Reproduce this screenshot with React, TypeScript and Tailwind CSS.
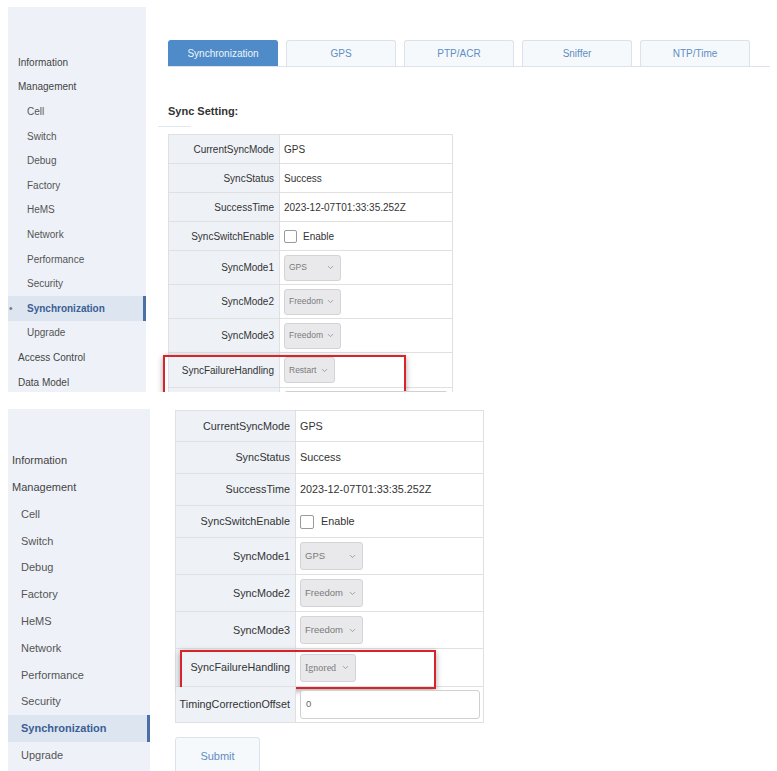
import React from 'react';
import { ChevronDown } from 'lucide-react';

const font = { fontFamily: '"Liberation Sans", Arial, sans-serif' };

type NavItem = { label: string; sub?: boolean; active?: boolean };

const navTop: NavItem[] = [
  { label: 'Information' },
  { label: 'Management' },
  { label: 'Cell', sub: true },
  { label: 'Switch', sub: true },
  { label: 'Debug', sub: true },
  { label: 'Factory', sub: true },
  { label: 'HeMS', sub: true },
  { label: 'Network', sub: true },
  { label: 'Performance', sub: true },
  { label: 'Security', sub: true },
  { label: 'Synchronization', sub: true, active: true },
  { label: 'Upgrade', sub: true },
  { label: 'Access Control' },
  { label: 'Data Model' },
];

const navBottom = navTop.slice(0, 12);

const tabs = ['Synchronization', 'GPS', 'PTP/ACR', 'Sniffer', 'NTP/Time'];

const Select: React.FC<{ value: string; className: string; textClass?: string }> = ({
  value,
  className,
  textClass = '',
}) => (
  <div
    className={`flex items-center justify-between gap-[3px] bg-[#e9e9ec] border border-[#d4d4d8] rounded-[3px] pl-[4px] pr-[5px] text-[#7a7a7a] ${className}`}
  >
    <span className={`whitespace-nowrap ${textClass}`}>{value}</span>
    <ChevronDown size={9} strokeWidth={2} className="shrink-0 text-[#8a8a8a]" />
  </div>
);

const Checkbox: React.FC<{ size: string }> = ({ size }) => (
  <span className={`inline-block bg-white border border-[#9a9a9a] rounded-[2px] ${size}`} />
);

type Row = { label: string; value: React.ReactNode; h: string; highlight?: boolean };

const SettingsTable: React.FC<{
  rows: Row[];
  labelW: string;
  valueW: string;
  text: string;
  box: string;
}> = ({ rows, labelW, valueW, text, box }) => (
  <div className={`border-l border-t border-[#e0e0e0] w-fit text-[#333] ${text}`}>
    {rows.map((row, i) => (
      <div key={i} className={`relative flex border-b border-[#e0e0e0] ${row.h}`}>
        <div
          className={`flex items-center justify-end pr-[5px] bg-[#eef2f7] border-r border-[#e0e0e0] whitespace-nowrap ${labelW}`}
        >
          {row.label}
        </div>
        <div className={`flex items-center pl-[4px] border-r border-[#e0e0e0] ${valueW}`}>
          {row.value}
        </div>
        {row.highlight && (
          <div className={`absolute border-2 border-[#d9232b] shadow-[0_2px_6px_rgba(0,0,0,0.35)] ${box}`} />
        )}
      </div>
    ))}
  </div>
);

const App: React.FC = () => {
  const topRows: Row[] = [
    { label: 'CurrentSyncMode', value: 'GPS', h: 'h-[29px]' },
    { label: 'SyncStatus', value: 'Success', h: 'h-[29px]' },
    { label: 'SuccessTime', value: '2023-12-07T01:33:35.252Z', h: 'h-[29px]' },
    {
      label: 'SyncSwitchEnable',
      value: (
        <span className="flex items-center gap-[6px]">
          <Checkbox size="w-[13px] h-[13px]" />
          Enable
        </span>
      ),
      h: 'h-[29px]',
    },
    { label: 'SyncMode1', value: <Select value="GPS" className="w-[57px] h-[26px] text-[8.5px]" />, h: 'h-[34px]' },
    { label: 'SyncMode2', value: <Select value="Freedom" className="w-[57px] h-[26px] text-[8.5px]" />, h: 'h-[34px]' },
    { label: 'SyncMode3', value: <Select value="Freedom" className="w-[57px] h-[26px] text-[8.5px]" />, h: 'h-[34px]' },
    {
      label: 'SyncFailureHandling',
      value: <Select value="Restart" className="w-[51px] h-[26px] text-[8.5px]" />,
      h: 'h-[35px]',
      highlight: true,
    },
    {
      // next row, only its top edge shows in this capture
      label: '',
      value: <div className="w-[164px] h-[26px] mt-[3px] self-start border border-[#d0d0d0] rounded-[3px] bg-white" />,
      h: 'h-[30px]',
    },
  ];

  const bottomRows: Row[] = [
    { label: 'CurrentSyncMode', value: 'GPS', h: 'h-[31px]' },
    { label: 'SyncStatus', value: 'Success', h: 'h-[32px]' },
    { label: 'SuccessTime', value: '2023-12-07T01:33:35.252Z', h: 'h-[32px]' },
    {
      label: 'SyncSwitchEnable',
      value: (
        <span className="flex items-center gap-[7px]">
          <Checkbox size="w-[14px] h-[14px]" />
          Enable
        </span>
      ),
      h: 'h-[32px]',
    },
    { label: 'SyncMode1', value: <Select value="GPS" className="w-[63px] h-[28px] text-[9.5px]" />, h: 'h-[37px]' },
    { label: 'SyncMode2', value: <Select value="Freedom" className="w-[63px] h-[28px] text-[9.5px]" />, h: 'h-[37px]' },
    { label: 'SyncMode3', value: <Select value="Freedom" className="w-[63px] h-[28px] text-[9.5px]" />, h: 'h-[37px]' },
    {
      label: 'SyncFailureHandling',
      value: (
        <Select
          value="Ignored"
          className="w-[56px] h-[28px] text-[10px]"
          textClass="font-['Liberation_Serif',serif]"
        />
      ),
      h: 'h-[38px]',
      highlight: true,
    },
    {
      label: 'TimingCorrectionOffset',
      value: (
        <div className="w-[180px] h-[29px] flex items-center pl-[5px] border border-[#d0d0d0] rounded-[3px] bg-white text-[9.5px] text-[#666]">
          0
        </div>
      ),
      h: 'h-[36px]',
    },
  ];

  return (
    <div className="w-[777px] h-[771px] bg-white overflow-hidden" style={font}>
      {/* First capture */}
      <div className="flex h-[392px] overflow-hidden">
        <aside className="mt-[7px] ml-[8px] w-[138px] shrink-0 bg-[#eef2f8] pt-[43px]">
          {navTop.map((item) => (
            <div
              key={item.label}
              className={`relative flex items-center h-[24.6px] text-[10px] ${
                item.sub ? 'pl-[19px]' : 'pl-[10px]'
              } ${
                item.active
                  ? 'bg-[#dde5f0] font-bold text-[#3a5f95] border-r-[3px] border-[#4a70a6]'
                  : item.sub
                  ? 'text-[#555]'
                  : 'text-[#444]'
              }`}
            >
              {item.active && <span className="absolute left-[1px] text-[#777] font-normal">•</span>}
              {item.label}
            </div>
          ))}
        </aside>

        <main className="flex-1 ml-[22px] mt-[40px] mr-[7px]">
          {/* Tabs */}
          <div className="flex gap-[8px] border-b border-[#dde3ea]">
            {tabs.map((tab, i) => (
              <div
                key={tab}
                className={`w-[110px] h-[26px] flex items-center justify-center rounded-t-[3px] text-[10px] border border-b-0 ${
                  i === 0
                    ? 'bg-[#4e8bc8] border-[#4e8bc8] text-[#eef5fc]'
                    : 'bg-[#f6f9fc] border-[#dbe2ea] text-[#5e8ec2]'
                }`}
              >
                {tab}
              </div>
            ))}
          </div>

          <h3 className="mt-[37px] text-[11px] font-bold text-[#333] leading-[14px]">Sync Setting:</h3>
          <div className="mt-[8px] -ml-[10px] w-[33px] h-[1px] bg-[#dde8f2]" />

          <div className="mt-[7px]">
            <SettingsTable
              rows={topRows}
              labelW="w-[111px]"
              valueW="w-[173px]"
              text="text-[10px]"
              box="-left-[6px] top-[2px] w-[243px] h-[39px]"
            />
          </div>
        </main>
      </div>

      {/* Second capture */}
      <div className="flex h-[362px] mt-[17px] overflow-hidden">
        <aside className="ml-[8px] w-[142px] shrink-0 bg-[#eef2f8] pt-[38px]">
          {navBottom.map((item) => (
            <div
              key={item.label}
              className={`flex items-center h-[26.8px] text-[11px] ${item.sub ? 'pl-[13px]' : 'pl-[4px]'} ${
                item.active
                  ? 'bg-[#dde5f0] font-bold text-[#3a5f95] border-r-[3px] border-[#4a70a6]'
                  : item.sub
                  ? 'text-[#555]'
                  : 'text-[#444]'
              }`}
            >
              {item.label}
            </div>
          ))}
        </aside>

        <main className="flex-1 ml-[25px] mt-[1px]">
          <SettingsTable
            rows={bottomRows}
            labelW="w-[120px]"
            valueW="w-[188px]"
            text="text-[10.8px]"
            box="left-[4px] top-[1px] w-[256px] h-[39px]"
          />

          <button className="mt-[14px] w-[85px] h-[38px] bg-[#f6f9fc] border border-[#dbe2ea] rounded-[3px] text-[11px] text-[#5e8ec2]">
            Submit
          </button>
        </main>
      </div>
    </div>
  );
};

export default App;
